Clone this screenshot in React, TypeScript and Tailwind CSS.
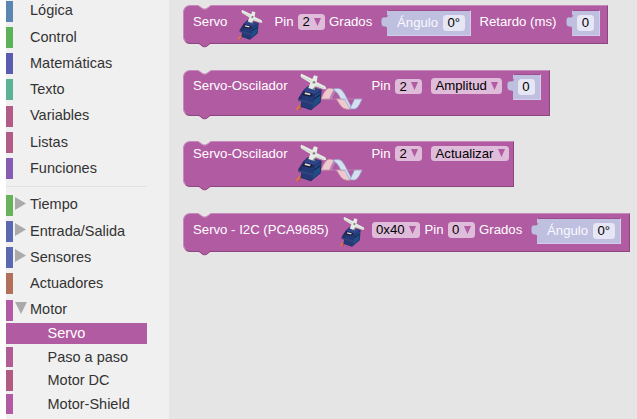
import React from "react";

type Category = { name: string; bar: string; arrow?: "right" | "down" };

const basics: Category[] = [
  { name: "Lógica", bar: "bg-[#5b86b2]" },
  { name: "Control", bar: "bg-[#5bb25b]" },
  { name: "Matemáticas", bar: "bg-[#5b5bb2]" },
  { name: "Texto", bar: "bg-[#5bb294]" },
  { name: "Variables", bar: "bg-[#b25b86]" },
  { name: "Listas", bar: "bg-[#b25b86]" },
  { name: "Funciones", bar: "bg-[#865bb2]" },
];

const devices: Category[] = [
  { name: "Tiempo", bar: "bg-[#67b25b]", arrow: "right" },
  { name: "Entrada/Salida", bar: "bg-[#5b69b2]", arrow: "right" },
  { name: "Sensores", bar: "bg-[#5b69b2]", arrow: "right" },
  { name: "Actuadores", bar: "bg-[#b26f5b]" },
  { name: "Motor", bar: "bg-[#b25ba4]", arrow: "down" },
];

const motors: Category[] = [
  { name: "Paso a paso", bar: "bg-[#b25b94]" },
  { name: "Motor DC", bar: "bg-[#b25b82]" },
  { name: "Motor-Shield", bar: "bg-[#b25ba4]" },
];

function CategoryRow({ item }: { item: Category }) {
  return (
    <div className="mb-[5.35px] flex h-[20.9px] shrink-0 items-center">
      <div className={`h-full w-[7px] ${item.bar}`} />
      <div className="flex w-[17px] justify-center pr-[2px] pb-[3.6px]">
        {item.arrow === "right" && (
          <svg width="11" height="13" viewBox="0 0 11 13"><path d="M0 0L11 6.5L0 13Z" fill="#aaa" /></svg>
        )}
        {item.arrow === "down" && (
          <svg width="12" height="12" viewBox="0 0 12 12"><path d="M0 0H12L6 12Z" fill="#aaa" /></svg>
        )}
      </div>
      <span className="pb-[1.6px] leading-[18px]">{item.name}</span>
    </div>
  );
}

function ServoParts() {
  return (
    <g>
      <path d="M44 104L20 130" stroke="#dc7444" strokeWidth="7" />
      <path d="M42 114L26 131" stroke="#8a4a38" strokeWidth="2.5" />
      <path d="M40 72L54 59L95 70L92 108L63 132L31 121L35 102L24 97Z" fill="#242e65" />
      <path d="M42 74L53 61L94 71L74 84Z" fill="#31448a" />
      <path d="M38 82L72 92L65 130L33 119Z" fill="#243a78" />
      <path d="M74 87L92 76L90 106L66 127Z" fill="#1d4e86" />
      <path d="M24 97L71 109L70 115L25 103Z" fill="#33437c" />
      <path d="M72 98L91 85" stroke="#1c2854" strokeWidth="4" />
      <path d="M45 76L67 82L62 91L37 86Z" fill="#17182d" />
      <path d="M46 78L62 82L60 87L43 83Z" fill="#d9dce0" />
      <path d="M67 57L77 60L74 72L64 69Z" fill="#758e87" />
      <path d="M34 22L41 25L67 38L72 27L83 30L80 47L106 60L109 68L101 69L76 60L67 69L55 65L61 50L35 34Q29 27 34 22Z" fill="#e6ece4" />
      <path d="M38 32L64 45M79 57L103 66" stroke="#b7c7bb" strokeWidth="2" />
      <circle cx="72" cy="48" r="5" fill="#b4beb1" />
      <circle cx="72" cy="48" r="2.5" fill="#715c69" />
    </g>
  );
}

function SmallServo() {
  return (
    <svg className="block h-[30px] w-[25px]" viewBox="20 22 90 111"><ServoParts /></svg>
  );
}

function OscillatorServo() {
  return (
    <svg className="block h-[38px] w-[67px]" viewBox="18 20 201 114">
      <path d="M94 98C102 78 109 66 119 66C127 66 132 69 137 74C130 80 125 87 120 98Z" fill="#edc9cf" stroke="#cf929f" strokeWidth="2" />
      <path d="M139 98H166L184 127C180 129 173 129 168 128C154 126 149 112 139 98Z" fill="#edc9cf" stroke="#cf929f" strokeWidth="2" />
      <path d="M118 98C124 82 129 70 137 67L140 74C133 80 130 87 126 98Z" fill="#b782b5" />
      <path d="M129 69C135 66 151 64 157 73C167 85 173 102 184 122L180 127L164 99H153C147 87 141 76 129 69Z" fill="#d4dff0" stroke="#8ba5cb" strokeWidth="2" />
      <path d="M180 127C185 117 189 107 194 98H216C209 115 201 130 190 128Z" fill="#d4dff0" stroke="#8ba5cb" strokeWidth="2" />
      <path d="M95 98H216" stroke="#c7a1bc" strokeWidth="1.5" />
      <ServoParts />
    </svg>
  );
}

function Dropdown({ text, size }: { text: string; size: string }) {
  return (
    <div className={`flex h-[15.5px] items-center justify-between rounded-[3.5px] bg-[#dfbcd9] pr-[4px] pl-[4.5px] text-black ${size}`}>
      <span className="leading-[15px]">{text}</span>
      <svg width="7" height="8" viewBox="0 0 7 8"><path d="M0 0H7L3.5 8Z" fill="#b15ba2" /></svg>
    </div>
  );
}

function ValueBlock({ label, value, size }: { label?: string; value: string; size: string }) {
  return (
    <div className={`relative flex h-[25.5px] items-start border border-t-[#9b4d8c] border-r-[#d4cce8] border-b-[#d4cce8] border-l-[#bfbfe0] bg-[#bfbfe0] pt-[4px] ${size}`}>
      <svg className="absolute top-[3px] -left-[8px]" width="9" height="16" viewBox="0 0 9 16">
        <path d="M8 1C7 6 1 -1 1 8C1 16 7 10 8 15H9V1Z" fill="#bfbfe0" />
        <path d="M8 1C7 6 1 -1 1 8C1 11 2 12.5 3.5 12.5" fill="none" stroke="#9b5c9c" strokeWidth=".7" />
      </svg>
      {label && <span className="w-[46px] shrink-0 pl-[9px] leading-[16px] text-[#fafaff]">{label}</span>}
      <span className={`h-[16px] rounded-[3.5px] bg-[#e6e6f4] text-center leading-[16px] text-black ${label ? "ml-[9px] w-[21.5px]" : "ml-[4px] w-[17px]"}`}>{value}</span>
    </div>
  );
}

function Block({ size, children }: { size: string; children: React.ReactNode }) {
  return (
    <div className={`relative ml-[14px] flex shrink-0 items-start rounded-l-[7px] border border-t-[#c889bd] border-r-[#8d4780] border-b-[#8d4780] border-l-[#c889bd] bg-[#b15ba2] pl-[9px] whitespace-nowrap ${size}`}>
      <svg className="absolute -top-[1px] left-[13px]" width="16" height="6" viewBox="0 0 16 6">
        <path d="M1 0L6.2 3.7H9L14.2 0Z" fill="#e5e5e5" />
        <path d="M1 .5L6.2 4.2H9L14.2 .5" fill="none" stroke="#c889bd" />
      </svg>
      <svg className="absolute -bottom-[5px] left-[13px]" width="16" height="6" viewBox="0 0 16 6">
        <path d="M1 0V.8L6.2 4.7H9L14.2 .8V0Z" fill="#b15ba2" />
        <path d="M1 .8L6.2 4.7H9L14.2 .8" fill="none" stroke="#8d4780" />
      </svg>
      {children}
    </div>
  );
}

function Cell({ size, children }: { size: string; children: React.ReactNode }) {
  return <div className={`shrink-0 ${size}`}>{children}</div>;
}

export default function App() {
  return (
    <main className="flex h-[419px] w-[637px] overflow-hidden bg-white pl-[6px] font-['Liberation_Sans',Arial,sans-serif]">
      <aside className="flex w-[163px] shrink-0 flex-col bg-[#f0f0f0] pt-[.7px] text-[14.5px] text-[#333]">
        {basics.map((item) => <CategoryRow key={item.name} item={item} />)}
        <div className="mt-[1.8px] mb-[7.55px] h-[1px] w-[141px] shrink-0 bg-[#e2e2e2]" />
        {devices.map((item) => <CategoryRow key={item.name} item={item} />)}
        <div className="-mt-[3.05px] mb-[2.9px] h-[20.9px] w-[141px] shrink-0 bg-[#b15ba2] pl-[41.5px] leading-[20px] text-white">Servo</div>
        {motors.map((item) => (
          <div key={item.name} className="mb-[2.6px] flex h-[20.9px] shrink-0">
            <div className={`w-[7px] ${item.bar}`} />
            <span className="pl-[34.5px] leading-[20px]">{item.name}</span>
          </div>
        ))}
      </aside>
      <section className="flex min-w-0 flex-1 flex-col bg-[#e5e5e5] pt-[5px] text-[13.2px] leading-[16px] text-white">
        <Block size="h-[39px] w-[425px]">
          <Cell size="w-[45px] pt-[8px]">Servo</Cell>
          <Cell size="w-[36.5px] pt-[4px]"><SmallServo /></Cell>
          <Cell size="w-[23.5px] pt-[8px]">Pin</Cell>
          <Cell size="w-[31px] pt-[8px]"><Dropdown text="2" size="w-[26.5px]" /></Cell>
          <Cell size="w-[58px] pt-[8px]">Grados</Cell>
          <Cell size="w-[92.5px] pt-[4px]"><ValueBlock label="Ángulo" value="0°" size="w-[84px]" /></Cell>
          <Cell size="w-[92.5px] pt-[8px]">Retardo (ms)</Cell>
          <Cell size="w-[28px] pt-[4px]"><ValueBlock value="0" size="w-[28px]" /></Cell>
        </Block>
        <div className="h-[26px] shrink-0" />
        <Block size="h-[46px] w-[366.5px]">
          <Cell size="w-[103px] pt-[7px]">Servo-Oscilador</Cell>
          <Cell size="w-[75.5px] pt-[2px]"><OscillatorServo /></Cell>
          <Cell size="w-[23.5px] pt-[7px]">Pin</Cell>
          <Cell size="w-[36px] pt-[7.5px]"><Dropdown text="2" size="w-[27px]" /></Cell>
          <Cell size="w-[81.5px] pt-[7px]"><Dropdown text="Amplitud" size="w-[71px]" /></Cell>
          <Cell size="w-[28px] pt-[3px]"><ValueBlock value="0" size="w-[28px]" /></Cell>
        </Block>
        <div className="h-[25px] shrink-0" />
        <Block size="h-[46px] w-[331px]">
          <Cell size="w-[103px] pt-[3.5px]">Servo-Oscilador</Cell>
          <Cell size="w-[75.5px] pt-[2px]"><OscillatorServo /></Cell>
          <Cell size="w-[23.5px] pt-[3.5px]">Pin</Cell>
          <Cell size="w-[36px] pt-[3.5px]"><Dropdown text="2" size="w-[27px]" /></Cell>
          <Cell size="w-[78px] pt-[3.5px]"><Dropdown text="Actualizar" size="w-[77.5px]" /></Cell>
        </Block>
        <div className="h-[26px] shrink-0" />
        <Block size="h-[39px] w-[447px]">
          <Cell size="w-[147px] pt-[8px]">Servo - I2C (PCA9685)</Cell>
          <Cell size="w-[31.5px] pt-[3px]"><SmallServo /></Cell>
          <Cell size="w-[53px] pt-[8px]"><Dropdown text="0x40" size="w-[48px]" /></Cell>
          <Cell size="w-[23px] pt-[8px]">Pin</Cell>
          <Cell size="w-[31.5px] pt-[8px]"><Dropdown text="0" size="w-[27px]" /></Cell>
          <Cell size="w-[58px] pt-[8px]">Grados</Cell>
          <Cell size="w-[84px] pt-[4px]"><ValueBlock label="Ángulo" value="0°" size="w-[84px]" /></Cell>
        </Block>
      </section>
    </main>
  );
}
